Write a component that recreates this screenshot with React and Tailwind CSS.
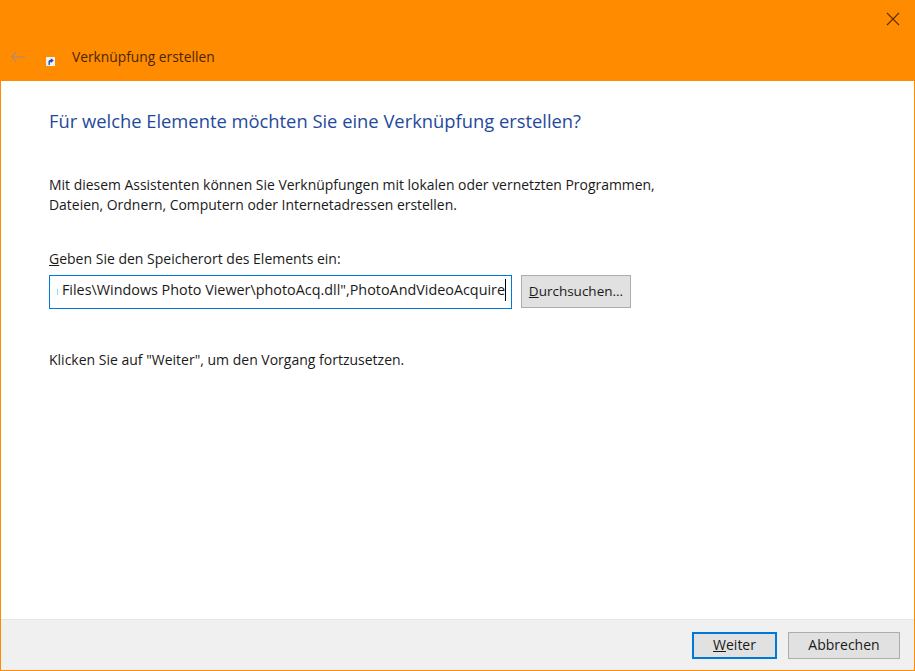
import React from "react";

const App = () => {
  return (
    <div className="w-[915px] h-[671px] flex flex-col overflow-hidden bg-[#ff8c00] font-['Open_Sans',sans-serif] text-[#1a1a1a]">
      {/* title bar */}
      <div className="h-[81px] shrink-0 flex flex-col">
        <div className="flex justify-end pt-[12px] pr-[15px] h-[38px]">
          <svg width="14" height="14" viewBox="0 0 14 14" fill="none" stroke="#5c2f00" strokeWidth="1.1">
            <path d="M1 1 L13 13 M13 1 L1 13" />
          </svg>
        </div>
        <div className="flex items-center h-[38px]">
          <svg className="ml-[10px]" width="16" height="12" viewBox="0 0 16 12" fill="none" stroke="#c08a55" strokeWidth="1.5">
            <path d="M15 6 H1.5 M6.5 1 L1.5 6 L6.5 11" />
          </svg>
          <svg className="ml-[20px] mt-[9px]" width="9" height="9" viewBox="0 0 9 9">
            <rect width="9" height="9" fill="#eef1f8" />
            <path d="M2.5 8 V4.5 Q2.5 2.8 4.8 2.8 V1.2 L7.8 3.6 L4.8 6 V4.6 Q3.8 4.6 3.8 8 Z" fill="#1f4fa8" />
          </svg>
          <span className="ml-[17px] text-[13.8px] text-[#4a2600]">Verknüpfung erstellen</span>
        </div>
      </div>

      {/* content */}
      <div className="flex-1 mx-px flex flex-col bg-white">
        <div className="flex-1 pl-[48px]">
          <h1 className="mt-[26px] text-[18.35px] leading-[28px] font-normal text-[#1f4a9c]">
            Für welche Elemente möchten Sie eine Verknüpfung erstellen?
          </h1>
          <p className="mt-[40px] text-[13.95px] leading-[20px]">
            Mit diesem Assistenten können Sie Verknüpfungen mit lokalen oder vernetzten Programmen,
            <br />
            Dateien, Ordnern, Computern oder Internetadressen erstellen.
          </p>
          <p className="mt-[34px] text-[14px] leading-[20px]">
            <span className="underline">G</span>eben Sie den Speicherort des Elements ein:
          </p>
          <div className="mt-[6px] flex items-start gap-[9px]">
            <div className="w-[463px] h-[34px] border border-[#0078d7] flex items-center pl-[7px] pr-[5px] pb-[4px] text-[14.36px] whitespace-nowrap">
              <div className="flex-1 min-w-0 overflow-hidden flex justify-end">
                <span className="shrink-0 border-r border-black">"C:\Program Files\Windows Photo Viewer\photoAcq.dll",PhotoAndVideoAcquire</span>
              </div>
            </div>
            <button className="w-[110px] h-[33px] bg-[#e1e1e1] border border-[#adadad] text-[13.5px]">
              <span className="underline">D</span>urchsuchen...
            </button>
          </div>
          <p className="mt-[41px] text-[14px] leading-[20px]">Klicken Sie auf "Weiter", um den Vorgang fortzusetzen.</p>
        </div>

        {/* footer */}
        <div className="h-[51px] shrink-0 bg-[#f0f0f0] border-t border-[#e6e6e6] flex justify-end items-center gap-[11px] pr-[14px] text-[14px]">
          <button className="w-[85px] h-[27px] pb-[2px] bg-[#e1e1e1] border-2 border-[#0078d7]">
            <span className="underline">W</span>eiter
          </button>
          <button className="w-[112px] h-[27px] pb-[2px] bg-[#e1e1e1] border border-[#adadad]">Abbrechen</button>
        </div>
      </div>
      <div className="h-px shrink-0" />
    </div>
  );
};

export default App;
